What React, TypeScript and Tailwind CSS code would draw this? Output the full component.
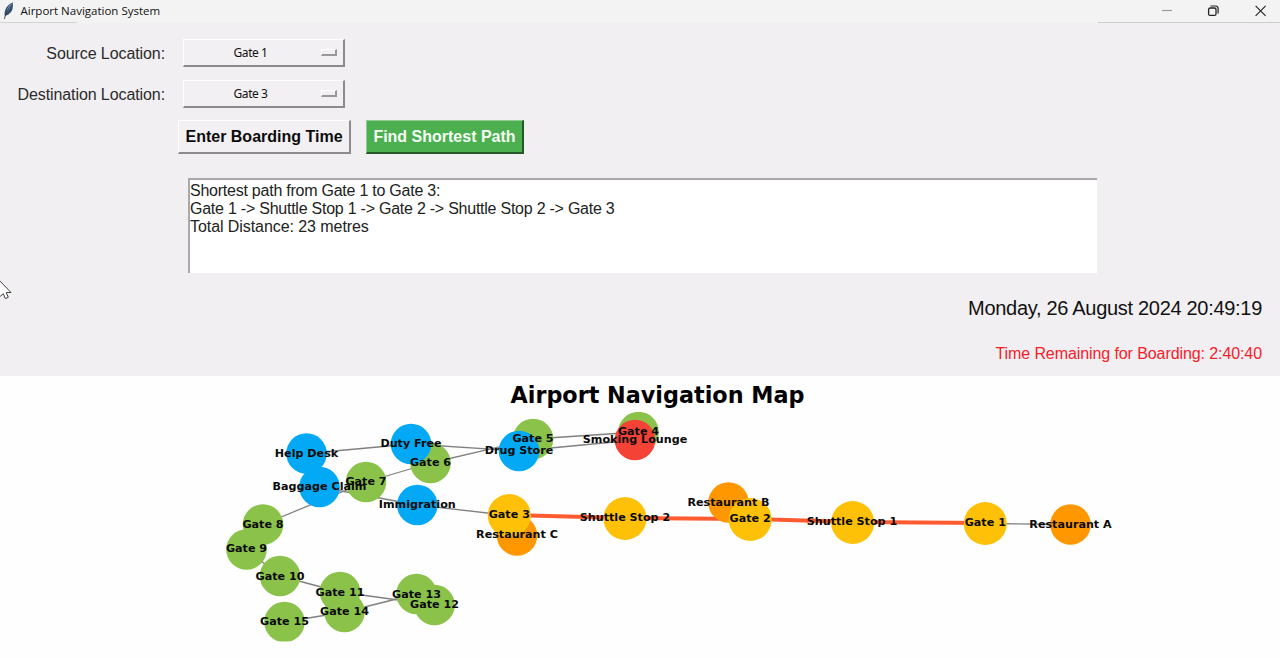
import React from "react";

type Kind = "gate" | "service" | "food" | "route" | "smoke";

interface MapNode {
  id: string;
  x: number;
  y: number;
  kind: Kind;
  lx?: number;
  ly?: number;
}

const COLORS: Record<Kind, string> = {
  gate: "#8bc34a",
  service: "#03a9f4",
  food: "#ff9800",
  route: "#ffc107",
  smoke: "#f44336",
};

// Map coordinates are relative to the top-left corner of the map canvas.
const NODES: MapNode[] = [
  { id: "Gate 4", x: 638.5, y: 56, kind: "gate", ly: 55 },
  { id: "Gate 5", x: 533, y: 63, kind: "gate", ly: 62 },
  { id: "Gate 6", x: 430.5, y: 87, kind: "gate", ly: 86 },
  { id: "Gate 7", x: 366, y: 106, kind: "gate", ly: 105.5 },
  { id: "Gate 8", x: 263, y: 148.5, kind: "gate" },
  { id: "Gate 9", x: 246.5, y: 173.5, kind: "gate", ly: 172.8 },
  { id: "Gate 10", x: 280, y: 200, kind: "gate" },
  { id: "Gate 11", x: 340, y: 216, kind: "gate" },
  { id: "Gate 12", x: 434.5, y: 229, kind: "gate", ly: 228.3 },
  { id: "Gate 13", x: 416.5, y: 218, kind: "gate" },
  { id: "Gate 14", x: 344.5, y: 236, kind: "gate", ly: 235 },
  { id: "Gate 15", x: 284.5, y: 246, kind: "gate", ly: 245 },
  { id: "Restaurant A", x: 1070.5, y: 148.5, kind: "food" },
  { id: "Restaurant B", x: 728.5, y: 126.5, kind: "food" },
  { id: "Restaurant C", x: 517, y: 159.5, kind: "food", ly: 158.8 },
  { id: "Help Desk", x: 306.5, y: 77.5, kind: "service" },
  { id: "Duty Free", x: 411, y: 68, kind: "service", ly: 67.2 },
  { id: "Drug Store", x: 519, y: 75, kind: "service", ly: 74.500 },
  { id: "Baggage Claim", x: 319.5, y: 111, kind: "service", ly: 110.500 },
  { id: "Immigration", x: 417.3, y: 129, kind: "service", ly: 128.500 },
  { id: "Smoking Lounge", x: 635, y: 64, kind: "smoke", ly: 63.4 },
  { id: "Gate 3", x: 509.3, y: 139.5, kind: "route", ly: 138.8 },
  { id: "Shuttle Stop 2", x: 625, y: 142.5, kind: "route", ly: 141.800 },
  { id: "Gate 2", x: 750.2, y: 143.5, kind: "route", ly: 142.800 },
  { id: "Shuttle Stop 1", x: 852.7, y: 146.5, kind: "route", lx: 852, ly: 145.6 },
  { id: "Gate 1", x: 985.3, y: 147.5, kind: "route", ly: 146.800 },
];

const EDGES: [string, string][] = [
  ["Help Desk", "Duty Free"],
  ["Help Desk", "Baggage Claim"],
  ["Duty Free", "Drug Store"],
  ["Drug Store", "Smoking Lounge"],
  ["Gate 4", "Gate 5"],
  ["Gate 5", "Gate 6"],
  ["Gate 6", "Gate 7"],
  ["Gate 7", "Gate 8"],
  ["Gate 8", "Gate 9"],
  ["Gate 9", "Gate 10"],
  ["Gate 10", "Gate 11"],
  ["Gate 11", "Gate 12"],
  ["Gate 12", "Gate 13"],
  ["Gate 13", "Gate 14"],
  ["Gate 14", "Gate 15"],
  ["Baggage Claim", "Immigration"],
  ["Immigration", "Gate 3"],
  ["Gate 3", "Restaurant C"],
  ["Gate 2", "Restaurant B"],
  ["Gate 1", "Restaurant A"],
];

const PATH = ["Gate 1", "Shuttle Stop 1", "Gate 2", "Shuttle Stop 2", "Gate 3"];

const find = (id: string) => NODES.find((n) => n.id === id)!;

function Feather() {
  return (
    <svg width="12" height="18" viewBox="0 0 12 18" className="shrink-0">
      <path d="M9.800 .5C6.500 1.500 2.800 5 1.900 9.200c-.4 1.800-.4 3.200 0 4.600C5.600 13 8.800 10.500 9.600 6.500c.4-2 .5-4 .2-6z" fill="#38506e" />
      <path d="M9 1.500C6 3 4 6.500 3.200 11c2-2.500 4-5.500 5.800-9.500z" fill="#8fb2d8" />
      <path d="M7.800 3.500C4.800 7 2.600 11.500 1.400 17" stroke="#1c2836" strokeWidth="0.800" fill="none" />
    </svg>
  );
}

function TitleBar() {
  return (
    <header className="flex h-[23px] shrink-0 items-start justify-between bg-[#f3f3f3]">
      <div className="flex h-full w-[400px] flex-col">
        <div className="flex h-[22px] items-center pl-[3px]">
          <Feather />
          <span className="ml-[5.500px] font-['Open_Sans','Noto_Sans',sans-serif] text-[11.500px] leading-[22px] whitespace-nowrap text-[#111]">
            Airport Navigation System
          </span>
        </div>
        <div className="h-px w-[77px] bg-[#d3d3d5]" />
      </div>
      <div className="flex h-full w-[182px] flex-col">
        <div className="flex h-[22px] items-center pl-[63px]">
          <svg width="112" height="20" viewBox="0 0 112 20" fill="none">
            <path d="M1 9.500h10" stroke="#9a9a9a" strokeWidth="1.200" />
            <rect x="47.600" y="7" width="7.400" height="7.400" rx="1.500" stroke="#222" strokeWidth="1.300" />
            <path d="M49.500 5h5.200a2.400 2.400 0 0 1 2.400 2.400v5.200" stroke="#222" strokeWidth="1.200" />
            <path d="M94.600 4.800l10 10m0-10l-10 10" stroke="#222" strokeWidth="1.100" />
          </svg>
        </div>
        <div className="h-px bg-[#cdcdd0]" />
      </div>
    </header>
  );
}

function OptionMenu({ value }: { value: string }) {
  return (
    <button className="flex h-7 w-[162px] items-center border-t border-r-2 border-b-2 border-l border-t-white border-r-[#8c8a8e] border-b-[#8c8a8e] border-l-white bg-[#f2f0f3] pr-[6px]">
      <span className="flex-1 pr-[4px] text-center font-['Noto_Sans','Open_Sans',sans-serif] text-[12px] leading-[18px] tracking-[-0.450px] text-[#111]">
        {value}
      </span>
      <span className="h-[7px] w-4 border-t border-r-2 border-b-2 border-l border-t-white border-r-[#99979b] border-b-[#99979b] border-l-white" />
    </button>
  );
}

function Field({ label, value }: { label: string; value: string }) {
  return (
    <div className="flex h-7 items-center">
      <label className="w-[165px] pt-px text-right text-[16px] leading-5 tracking-[-0.090px] whitespace-nowrap text-[#2b2b2b]">{label}</label>
      <div className="ml-[18px]">
        <OptionMenu value={value} />
      </div>
    </div>
  );
}

function AirportMap() {
  return (
    <svg width="1280" height="282" viewBox="0 0 1280 282" className="block bg-[#fefefe] font-['DejaVu_Sans',sans-serif] font-bold">
      <defs>
        <clipPath id="plot-area">
          <rect x="180" y="35.500" width="960" height="230" />
        </clipPath>
      </defs>
      <text x="657.500" y="26.500" fontSize="22.300" textAnchor="middle" textLength="294">
        Airport Navigation Map
      </text>
      <g clipPath="url(#plot-area)">
        {EDGES.map(([a, b]) => (
          <line key={a + b} x1={find(a).x} y1={find(a).y} x2={find(b).x} y2={find(b).y} stroke="#808080" strokeWidth="1.300" />
        ))}
        {PATH.slice(1).map((id, i) => (
          <line key={id} x1={find(PATH[i]).x} y1={find(PATH[i]).y - 0.5} x2={find(id).x} y2={find(id).y - 0.5} stroke="#ff5a30" strokeWidth="4" />
        ))}
        {NODES.map((n) => (
          <circle key={n.id} cx={n.x} cy={n.y} r={n.kind === "route" ? 21.5 : 20.3} fill={COLORS[n.kind]} />
        ))}
      </g>
      {NODES.map((n) => (
        <text key={n.id} x={n.lx ?? n.x} y={(n.ly ?? n.y) + 3.6} fontSize="11.150" textAnchor="middle" fill="#0a0a0a">
          {n.id}
        </text>
      ))}
    </svg>
  );
}

export default function App() {
  return (
    <div className="relative flex h-[658px] w-[1280px] flex-col overflow-hidden bg-[#f1eff2] font-['Liberation_Sans',Arial,sans-serif]">
      <TitleBar />
      <main className="flex h-[353px] shrink-0 flex-col pt-4">
        <div className="flex flex-col gap-[13px]">
          <Field label="Source Location:" value="Gate 1" />
          <Field label="Destination Location:" value="Gate 3" />
        </div>
        <div className="mt-3 flex gap-[15px] pl-[178px]">
          <button className="h-[34px] w-[173px] border-t border-r-2 border-b-2 border-l border-t-white border-r-[#8c8a8e] border-b-[#8c8a8e] border-l-white bg-[#f2f0f3] text-[16px] leading-[30px] font-bold whitespace-nowrap text-[#0c0c0c]">
            Enter Boarding Time
          </button>
          <button className="h-[34px] w-[158px] border-t border-r-2 border-b-2 border-l border-t-[#8fcd92] border-r-[#265728] border-b-[#265728] border-l-[#8fcd92] bg-[#4caf50] text-[16px] leading-[30px] font-bold whitespace-nowrap text-[#f6fff4]">
            Find Shortest Path
          </button>
        </div>
        <div className="mt-6 ml-[188px] h-[95px] w-[909px] border-t-2 border-l-2 border-t-[#aaa8ac] border-l-[#aaa8ac] bg-white pt-[2px] text-[16px] leading-[18px] tracking-[-0.240px] whitespace-nowrap text-[#222]">
          <p>Shortest path from Gate 1 to Gate 3:</p>
          <p>Gate 1 -&gt; Shuttle Stop 1 -&gt; Gate 2 -&gt; Shuttle Stop 2 -&gt; Gate 3</p>
          <p className="tracking-[-0.070px]">Total Distance: 23 metres</p>
        </div>
        <div className="mt-[23px] flex flex-col items-end gap-6 pr-[18px]">
          <p className="text-[20px] leading-6 tracking-[-0.300px] text-[#111]">Monday, 26 August 2024 20:49:19</p>
          <p className="text-[16px] leading-5 tracking-[-0.090px] text-[#f5202a]">Time Remaining for Boarding: 2:40:40</p>
        </div>
      </main>
      <AirportMap />
      <svg className="absolute top-[280px] left-0" width="14" height="20" viewBox="0 0 14 20">
        <path d="M-2 -1L11 12.500H6.200L8.300 17.300 5.300 18.500 3.300 13.800 -2 18z" fill="#fff" stroke="#444" strokeWidth="1" />
      </svg>
    </div>
  );
}
